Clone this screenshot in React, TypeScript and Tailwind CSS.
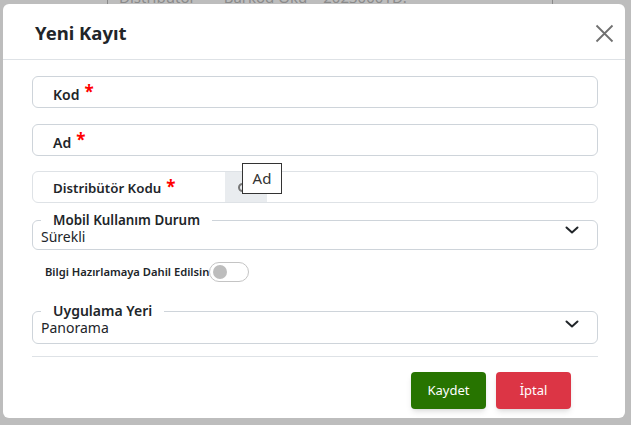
import React from "react";

function Star() {
  return <span className="text-[#ff0000] font-bold text-[17px] leading-none relative -top-[3px] ml-[5px]">*</span>;
}

function Chevron() {
  return (
    <svg width="14" height="8" viewBox="0 0 14 8" fill="none">
      <path d="M1.5 1.5 L7 6.5 L12.5 1.5" stroke="#212529" strokeWidth="2" strokeLinecap="round" strokeLinejoin="round" />
    </svg>
  );
}

export default function App() {
  return (
    <div className="w-[631px] h-[425px] bg-[#bdbdbd] overflow-hidden font-['Noto_Sans',sans-serif] text-[#212529]">
      <div className="h-[4px] overflow-hidden">
        <div className="flex items-end h-[14px] -mt-[10px] text-[15px] leading-[14px] text-[#8a8a8a]">
          <div className="ml-[107px] w-px h-[14px] bg-[#8a8a8a]" />
          <span className="ml-[11px]">Distribütor</span>
          <span className="ml-[28px]">Barkod Oku</span>
          <span className="ml-[16px]">20230001D:</span>
          <div className="ml-[145px] w-px h-[14px] bg-[#8a8a8a]" />
        </div>
      </div>
      <div className="ml-[3px] w-[622px] h-[414px] bg-white rounded-[6px] flex flex-col">
        <div className="h-[56px] border-b border-[#dee2e6] flex items-center justify-between pl-[32px] pr-[11px] pt-[3px]">
          <h1 className="text-[18.5px] font-bold text-[#212529]">Yeni Kayıt</h1>
          <svg width="19" height="19" viewBox="0 0 19 19" fill="none">
            <path d="M1.5 1.5 L17.5 17.5 M17.5 1.5 L1.5 17.5" stroke="#707070" strokeWidth="1.8" />
          </svg>
        </div>
        <div className="flex flex-col pl-[29px] pr-[27px] pt-[16px]">
          <div className="h-[32px] border border-[#ced4da] rounded-[6px] flex items-center pl-[20px] pt-[4px]">
            <span className="text-[14px] font-semibold">Kod</span>
            <Star />
          </div>
          <div className="mt-[16px] h-[32px] border border-[#ced4da] rounded-[6px] flex items-center pl-[20px] pt-[4px]">
            <span className="text-[14px] font-semibold">Ad</span>
            <Star />
          </div>
          <div className="mt-[15px] h-[32px] border border-[#dee2e6] rounded-[6px] flex items-stretch relative">
            <div className="w-[192px] flex items-center pl-[20px] pt-[4px]">
              <span className="text-[13.3px] font-semibold">Distribütör Kodu</span>
              <Star />
            </div>
            <div className="w-[42px] bg-[#e9ecef] flex items-center pl-[13px]">
              <div className="w-[9px] h-[9px] rounded-full border-2 border-[#777]" />
            </div>
            <div className="absolute left-[209px] -top-[9px] w-[40px] h-[31px] bg-white border border-[#333] flex items-center justify-center text-[15px] text-[#333]">
              Ad
            </div>
          </div>
          <fieldset className="mt-[8px] border border-[#ced4da] rounded-[6px] pl-[8px] pr-[18px]">
            <legend className="px-[12px] text-[13.4px] font-semibold leading-[18px]">Mobil Kullanım Durum</legend>
            <div className="h-[21px] flex items-start justify-between -mt-[1px]">
              <span className="text-[14px] leading-[17px]">Sürekli</span>
              <div className="-mt-[2px]"><Chevron /></div>
            </div>
          </fieldset>
          <div className="mt-[12px] h-[20px] flex items-center pl-[13px]">
            <span className="text-[11.2px] font-semibold">Bilgi Hazırlamaya Dahil Edilsin</span>
            <div className="w-[40px] h-[20px] rounded-full border border-[#c4c4c4] bg-white flex items-center pl-[3px]">
              <div className="w-[14px] h-[14px] rounded-full bg-[#bdbdbd]" />
            </div>
          </div>
          <fieldset className="mt-[20px] border border-[#ced4da] rounded-[6px] pl-[8px] pr-[18px]">
            <legend className="px-[12px] text-[14px] font-semibold leading-[18px]">Uygulama Yeri</legend>
            <div className="h-[24px] flex items-start justify-between -mt-[1px]">
              <span className="text-[14px] leading-[17px]">Panorama</span>
              <div className="mt-[1px]"><Chevron /></div>
            </div>
          </fieldset>
          <div className="mt-[12px] border-t border-[#dee2e6]" />
          <div className="mt-[15px] flex justify-end gap-[10px] pr-[27px]">
            <button className="w-[75px] h-[37px] rounded-[4px] bg-[#277400] text-white text-[13px] shadow-md">Kaydet</button>
            <button className="w-[75px] h-[37px] rounded-[4px] bg-[#dc3545] text-white text-[13px] shadow-md">İptal</button>
          </div>
        </div>
      </div>
    </div>
  );
}
